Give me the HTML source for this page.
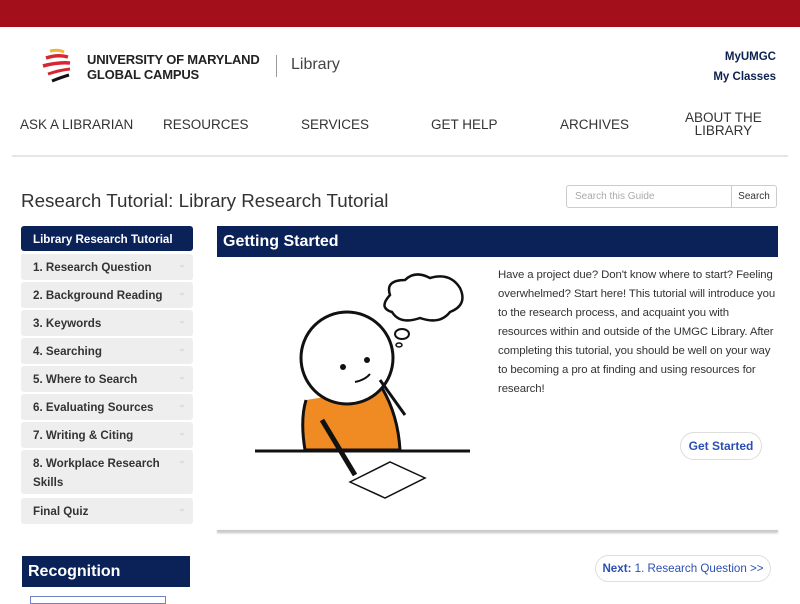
<!DOCTYPE html>
<html><head><meta charset="utf-8"><style>
body{margin:0;width:800px;height:600px;overflow:hidden;background:#fff;font-family:"Liberation Sans",sans-serif;position:relative}
.a{position:absolute}
.nav{font-size:13.5px;color:#333;text-align:center;line-height:13px}
.side{position:absolute;left:21px;width:172px;background:#eee;border-radius:3px;font-size:11.6px;font-weight:bold;color:#333;box-sizing:border-box;padding:4px 12px;line-height:19px;height:26px}
.side:after{content:"";position:absolute;right:8px;top:11px;border:3px solid transparent;border-top-color:#ddd}
.side.act:after{display:none}
</style></head><body>
<div class="a" style="left:0;top:0;width:800px;height:27px;background:#a3101b"></div>
<svg class="a" style="left:40px;top:46px" width="40" height="40" viewBox="0 0 40 40">
<path d="M10 5 Q18 3 24 6" stroke="#f2b53a" stroke-width="3" fill="none"/>
<path d="M6 12 Q18 8 28 11" stroke="#d7262f" stroke-width="3.5" fill="none"/>
<path d="M3 20 Q18 16 30 17" stroke="#d7262f" stroke-width="3.5" fill="none"/>
<path d="M8 28 Q20 24 30 23" stroke="#d7262f" stroke-width="3" fill="none"/>
<path d="M12 35 Q22 31 29 29" stroke="#111" stroke-width="3" fill="none"/>
</svg>
<div class="a" style="left:87px;top:52px;font-size:13px;font-weight:bold;color:#222;line-height:15px;letter-spacing:-0.2px">UNIVERSITY OF MARYLAND<br>GLOBAL CAMPUS</div>
<div class="a" style="left:276px;top:55px;width:1px;height:22px;background:#999"></div>
<div class="a" style="left:291px;top:56px;font-size:16px;color:#444">Library</div>
<div class="a" style="right:24px;top:47px;font-size:11.5px;font-weight:bold;color:#0c2150;text-align:right;line-height:20px">MyUMGC<br>My Classes</div>
<div class="a nav" style="left:20px;top:118px">ASK A LIBRARIAN</div>
<div class="a nav" style="left:163px;top:118px">RESOURCES</div>
<div class="a nav" style="left:301px;top:118px">SERVICES</div>
<div class="a nav" style="left:431px;top:118px">GET HELP</div>
<div class="a nav" style="left:560px;top:118px">ARCHIVES</div>
<div class="a nav" style="left:685px;top:111px">ABOUT THE<br>LIBRARY</div>
<div class="a" style="left:12px;top:155px;width:776px;height:2px;background:#e6e6e6"></div>
<div class="a" style="left:21px;top:190px;font-size:18.8px;color:#333">Research Tutorial: Library Research Tutorial</div>
<div class="a" style="left:566px;top:185px;width:166px;height:23px;border:1px solid #ccc;border-radius:3px 0 0 3px;font-size:10px;color:#aaa;line-height:22px;padding-left:8px;box-sizing:border-box">Search this Guide</div>
<div class="a" style="left:731px;top:185px;width:46px;height:23px;border:1px solid #ccc;border-radius:0 3px 3px 0;font-size:10px;color:#333;line-height:21px;text-align:center;box-sizing:border-box">Search</div>
<div class="side act" style="top:226px;background:#0b2258;color:#fff;height:25px">Library Research Tutorial</div>
<div class="side" style="top:254px">1. Research Question</div>
<div class="side" style="top:282px">2. Background Reading</div>
<div class="side" style="top:310px">3. Keywords</div>
<div class="side" style="top:338px">4. Searching</div>
<div class="side" style="top:366px">5. Where to Search</div>
<div class="side" style="top:394px">6. Evaluating Sources</div>
<div class="side" style="top:422px">7. Writing &amp; Citing</div>
<div class="side" style="top:450px;height:44px">8. Workplace Research<br>Skills</div>
<div class="side" style="top:498px">Final Quiz</div>
<div class="a" style="left:22px;top:556px;width:168px;height:31px;background:#0b2258;color:#fff;font-size:16px;font-weight:bold;line-height:31px;padding-left:6px;box-sizing:border-box">Recognition</div>
<div class="a" style="left:30px;top:596px;width:134px;height:6px;border:1px solid #7080c0"></div>
<div class="a" style="left:217px;top:226px;width:561px;height:31px;background:#0b2258;color:#fff;font-size:16px;font-weight:bold;line-height:31px;padding-left:6px;box-sizing:border-box">Getting Started</div>
<div class="a" style="left:217px;top:530px;width:561px;height:2px;background:#ccc;box-shadow:0 1px 2px #bbb"></div>
<svg class="a" style="left:250px;top:270px" width="225" height="235" viewBox="0 0 225 235">
<path d="M140 25 Q135 10 155 10 Q165 0 180 8 Q200 2 210 18 Q218 35 200 42 Q190 55 170 48 Q150 55 142 42 Q128 38 140 25Z" fill="#fff" stroke="#111" stroke-width="2.5"/>
<ellipse cx="152" cy="64" rx="7" ry="5" fill="none" stroke="#111" stroke-width="2"/>
<ellipse cx="149" cy="75" rx="3" ry="2" fill="none" stroke="#111" stroke-width="1.5"/>
<path d="M56 130 Q50 150 55 180 L150 180 Q148 145 132 118" fill="#f08a22" stroke="#111" stroke-width="3"/>
<circle cx="97" cy="88" r="46" fill="#fff" stroke="#111" stroke-width="3"/>
<circle cx="93" cy="97" r="3" fill="#111"/><circle cx="117" cy="90" r="3" fill="#111"/>
<path d="M105 112 Q115 110 120 104" stroke="#111" stroke-width="2" fill="none"/>
<path d="M130 110 L155 145" stroke="#111" stroke-width="3"/>
<line x1="5" y1="181" x2="220" y2="181" stroke="#111" stroke-width="3"/>
<path d="M100 212 L140 192 L175 208 L135 228Z" fill="#fff" stroke="#111" stroke-width="1.5"/>
<path d="M72 150 L105 205" stroke="#111" stroke-width="5"/>
</svg>
<div class="a" style="left:498px;top:266px;width:279px;font-size:11.4px;letter-spacing:-0.1px;color:#333;line-height:19px">Have a project due? Don't know where to start? Feeling overwhelmed? Start here! This tutorial will introduce you to the research process, and acquaint you with resources within and outside of the UMGC Library. After completing this tutorial, you should be well on your way to becoming a pro at finding and using resources for research!</div>
<div class="a" style="left:680px;top:432px;width:82px;height:28px;border:1px solid #ddd;border-radius:14px;box-sizing:border-box;font-size:12px;font-weight:bold;color:#2b4fb5;text-align:center;line-height:26px">Get Started</div>
<div class="a" style="left:595px;top:555px;width:176px;height:27px;border:1px solid #ddd;border-radius:14px;box-sizing:border-box;font-size:11.6px;color:#2b4fb5;text-align:center;line-height:25px"><b>Next:</b> 1. Research Question &gt;&gt;</div>
</body></html>
